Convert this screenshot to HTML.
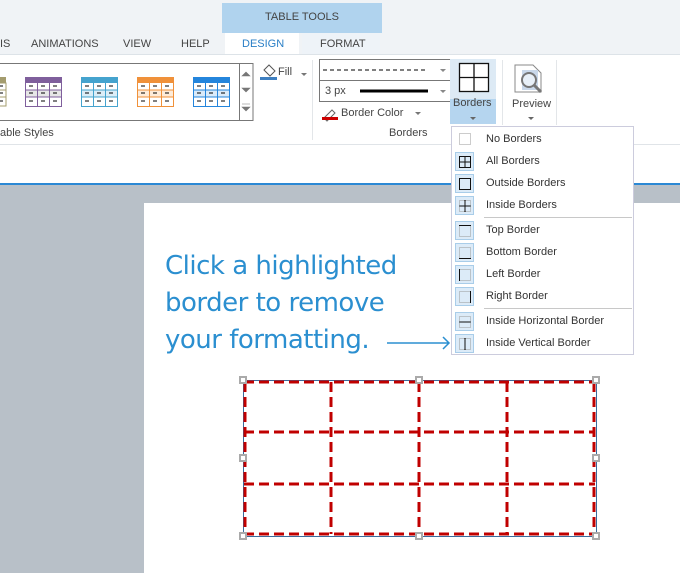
<!DOCTYPE html>
<html><head><style>
body{margin:0;width:680px;height:573px;overflow:hidden;position:relative;font-family:"Liberation Sans",sans-serif;background:#fff}
.a{position:absolute}
.t{font-size:11px;color:#444}
.mi{position:absolute;left:486px;font-size:11px;color:#333}
</style></head><body>
<div class="a" style="left:0;top:0;width:680px;height:55px;background:#f0f3f6"></div>
<div class="a" style="left:222px;top:3px;width:160px;height:30px;background:#b0d3ee"></div>
<div class="a t" style="left:222px;top:11px;width:160px;text-align:center;font-size:11px;color:#444">TABLE TOOLS</div>
<div class="a" style="left:225px;top:33px;width:74px;height:23px;background:#fff"></div>
<div class="a" style="left:302px;top:33px;width:78px;height:22px;background:#eef3f8"></div>
<div class="a t" style="left:0;top:38px">IS</div>
<div class="a t" style="left:31px;top:38px">ANIMATIONS</div>
<div class="a t" style="left:123px;top:38px">VIEW</div>
<div class="a t" style="left:181px;top:38px">HELP</div>
<div class="a t" style="left:242px;top:38px;color:#2a7fc6">DESIGN</div>
<div class="a t" style="left:320px;top:38px">FORMAT</div>
<div class="a" style="left:0;top:54px;width:680px;height:1px;background:#dde3e8"></div>
<div class="a" style="left:0;top:144px;width:680px;height:1px;background:#e0e4e8"></div>
<div class="a" style="left:0;top:183px;width:680px;height:2px;background:#2b88d4"></div>
<div class="a" style="left:0;top:185px;width:680px;height:388px;background:#b8c0c8"></div>
<div class="a" style="left:144px;top:203px;width:536px;height:370px;background:#fff"></div>

<svg class="a" style="left:0;top:0" width="680" height="573">
<!-- gallery -->
<rect x="-1" y="63.5" width="254" height="57" fill="#fff" stroke="#777"/>
<line x1="239.5" y1="64" x2="239.5" y2="120" stroke="#777"/>
<path d="M242 76l4-4 4 4z M242 88l4 4 4-4z M242 107l4 4 4-4z M242 104h8" fill="#777" stroke="#777" stroke-width=".6"/>
<g id="g">
</g>
<!-- table icons -->
<g stroke-width="1">
<rect x="-5" y="77" width="11" height="6" fill="#a49c6e"/><rect x="-5" y="83" width="11" height="23" fill="#fff" stroke="#a49c6e"/>
<rect x="25.5" y="77.5" width="36" height="29" fill="#fff" stroke="#7f5f9c"/><rect x="25" y="77" width="37" height="6" fill="#7f5f9c"/><rect x="26" y="90" width="35" height="7" fill="#e6e6e6"/>
<rect x="81.5" y="77.5" width="36" height="29" fill="#fff" stroke="#45a3ce"/><rect x="81" y="77" width="37" height="6" fill="#45a3ce"/><rect x="82" y="90" width="35" height="7" fill="#dcedf7"/>
<rect x="137.5" y="77.5" width="36" height="29" fill="#fff" stroke="#f0913a"/><rect x="137" y="77" width="37" height="6" fill="#f0913a"/><rect x="138" y="90" width="35" height="7" fill="#fdebd9"/>
<rect x="193.5" y="77.5" width="36" height="29" fill="#fff" stroke="#2485dc"/><rect x="193" y="77" width="37" height="6" fill="#2485dc"/><rect x="194" y="90" width="35" height="7" fill="#d9eaf9"/>
<path d="M25 90h37M25 97h37M37.5 83v24M49.5 83v24" stroke="#7f5f9c"/>
<path d="M81 90h37M81 97h37M93.5 83v24M105.5 83v24" stroke="#45a3ce"/>
<path d="M137 90h37M137 97h37M149.5 83v24M161.5 83v24" stroke="#f0913a"/>
<path d="M193 90h37M193 97h37M205.5 83v24M217.5 83v24" stroke="#2485dc"/>
<path d="M-5 90h11M-5 97h11" stroke="#a49c6e"/>
<path d="M29 86h4M41 86h4M53 86h4M29 93h4M41 93h4M53 93h4M29 101h4M41 101h4M53 101h4 M85 86h4M97 86h4M109 86h4M85 93h4M97 93h4M109 93h4M85 101h4M97 101h4M109 101h4 M141 86h4M153 86h4M165 86h4M141 93h4M153 93h4M165 93h4M141 101h4M153 101h4M165 101h4 M197 86h4M209 86h4M221 86h4M197 93h4M209 93h4M221 93h4M197 101h4M209 101h4M221 101h4M-1 86h4M-1 93h4M-1 101h4" stroke="#000"/>
</g>
<!-- fill -->
<path d="M264 70l5-5 6 6-5 5z" fill="#fff" stroke="#555"/><rect x="260" y="77" width="17" height="3" fill="#3e7fc0"/>
<path d="M301 73l3 3 3-3z" fill="#777"/>
<line x1="312.5" y1="60" x2="312.5" y2="140" stroke="#e3e6e9"/>
<!-- line style boxes -->
<rect x="319.5" y="59.5" width="132" height="21" fill="#fff" stroke="#777"/>
<rect x="319.5" y="80.5" width="132" height="21" fill="#fff" stroke="#777"/>
<line x1="323" y1="70" x2="428" y2="70" stroke="#000" stroke-dasharray="4,3"/>
<line x1="360" y1="91" x2="428" y2="91" stroke="#000" stroke-width="3"/>
<path d="M440 69l3 3 3-3zM440 90l3 3 3-3z" fill="#888"/>
<path d="M324 118l8-8 3 3-8 8z" fill="#fff" stroke="#666"/><rect x="322" y="117" width="16" height="3" fill="#c00"/>
<path d="M415 112l3 3 3-3z" fill="#777"/>
<!-- borders button -->
<rect x="450" y="59" width="46" height="65" fill="#b5d5ef"/>
<rect x="450" y="59" width="46" height="40" fill="#ddeaf5"/>
<rect x="459.5" y="63.5" width="29" height="28" fill="#fff" stroke="#111" stroke-width="1.3"/>
<path d="M474 63v29M459 77.5h30" stroke="#111" stroke-width="1.3"/>
<path d="M470 117l3 3 3-3z" fill="#666"/>
<line x1="502.5" y1="60" x2="502.5" y2="125" stroke="#e3e6e9"/>
<line x1="556.5" y1="60" x2="556.5" y2="125" stroke="#e3e6e9"/>
<!-- preview -->
<path d="M515 65h18l8 8v19h-26z" fill="#fff" stroke="#888"/>
<rect x="522" y="70" width="16" height="20" fill="#c9d8ea"/>
<circle cx="529" cy="80" r="7" fill="#e8f0f8" stroke="#777" stroke-width="2"/>
<line x1="534" y1="85" x2="541" y2="92" stroke="#777" stroke-width="3"/>
<path d="M528 117l3 3 3-3z" fill="#666"/>
<!-- menu -->
<rect x="451.5" y="126.5" width="182" height="228" fill="#fff" stroke="#ccd" />
<line x1="484" y1="217.5" x2="632" y2="217.5" stroke="#c8c8c8"/>
<line x1="484" y1="308.5" x2="632" y2="308.5" stroke="#c8c8c8"/>
<g fill="#dcebf8" stroke="#a9cde9">
<rect x="455.5" y="152.5" width="18" height="18"/><rect x="455.5" y="174.5" width="18" height="18"/><rect x="455.5" y="196.5" width="18" height="18"/>
<rect x="455.5" y="221.5" width="18" height="18"/><rect x="455.5" y="243.5" width="18" height="18"/><rect x="455.5" y="265.5" width="18" height="18"/><rect x="455.5" y="287.5" width="18" height="18"/>
<rect x="455.5" y="312.5" width="18" height="18"/><rect x="455.5" y="334.5" width="18" height="18"/>
</g>
<g fill="none" stroke="#999" stroke-dasharray="1,1">
<rect x="459.5" y="133.5" width="11" height="11"/><rect x="459.5" y="178.5" width="11" height="11"/><rect x="459.5" y="200.5" width="11" height="11"/>
<rect x="459.5" y="225.5" width="11" height="11"/><rect x="459.5" y="247.5" width="11" height="11"/><rect x="459.5" y="269.5" width="11" height="11"/><rect x="459.5" y="291.5" width="11" height="11"/><rect x="459.5" y="316.5" width="11" height="11"/><rect x="459.5" y="338.5" width="11" height="11"/>
</g>
<g fill="none" stroke="#111">
<rect x="459.5" y="156.5" width="11" height="11"/><path d="M465 156v12M459 162h12"/>
<rect x="459.5" y="178.5" width="11" height="11"/>
<path d="M465 200v12M459 206h12"/>
<path d="M459 225.5h12"/><path d="M459 258.5h12"/><path d="M459.5 269v12"/><path d="M470.5 291v12"/>
<path d="M459 322h12"/><path d="M465 338v12"/>
</g>
<!-- arrow -->
<path d="M387 343h62M443 337l6 6-6 6" fill="none" stroke="#2b8fd0" stroke-width="1.5"/>
<!-- table -->
<rect x="243.5" y="380.5" width="353" height="156" fill="none" stroke="#3a6b9c"/>
<g stroke="#c00000" stroke-width="3" stroke-dasharray="10,5" fill="none">
<path d="M244 382h351M244 432h351M244 484h351M244 534h351"/>
<path d="M245 382v152M331 382v152M419 382v152M507 382v152M594 382v152"/>
</g>
<g fill="#fff" stroke="#aaa" stroke-width="2">
<rect x="240" y="377" width="6" height="6"/><rect x="416" y="377" width="6" height="6"/><rect x="593" y="377" width="6" height="6"/>
<rect x="240" y="455" width="6" height="6"/><rect x="593" y="455" width="6" height="6"/>
<rect x="240" y="533" width="6" height="6"/><rect x="416" y="533" width="6" height="6"/><rect x="593" y="533" width="6" height="6"/>
</g>
</svg>
<div class="a t" style="left:278px;top:66px">Fill</div>
<div class="a t" style="left:325px;top:85px">3 px</div>
<div class="a t" style="left:341px;top:107px">Border Color</div>
<div class="a t" style="left:389px;top:127px">Borders</div>
<div class="a t" style="left:0;top:127px">able Styles</div>
<div class="a t" style="left:453px;top:97px">Borders</div>
<div class="a t" style="left:512px;top:98px">Preview</div>
<div class="mi" style="top:133px">No Borders</div>
<div class="mi" style="top:155px">All Borders</div>
<div class="mi" style="top:177px">Outside Borders</div>
<div class="mi" style="top:199px">Inside Borders</div>
<div class="mi" style="top:224px">Top Border</div>
<div class="mi" style="top:246px">Bottom Border</div>
<div class="mi" style="top:268px">Left Border</div>
<div class="mi" style="top:290px">Right Border</div>
<div class="mi" style="top:315px">Inside Horizontal Border</div>
<div class="mi" style="top:337px">Inside Vertical Border</div>
<div class="a" style="left:165px;top:248px;font-size:26px;line-height:37px;color:#2b8fd0;font-family:'DejaVu Sans','Liberation Sans',sans-serif;letter-spacing:-0.5px">Click a highlighted<br>border to remove<br>your formatting.</div>
</body></html>
